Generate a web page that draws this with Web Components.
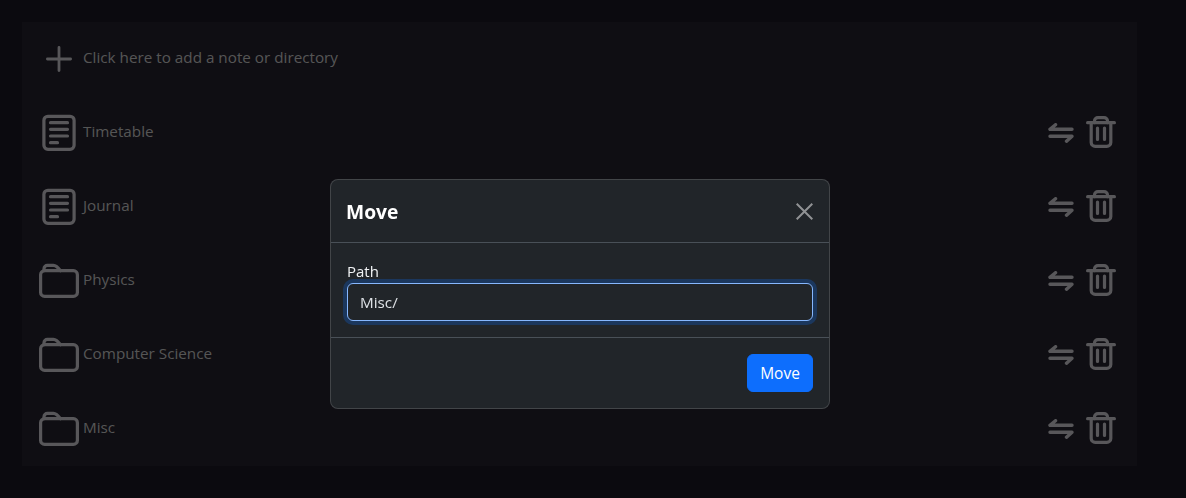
<!DOCTYPE html>
<html lang="en">
<head>
<meta charset="utf-8">
<title>Notes</title>
<style>
  html, body { margin: 0; height: 100%; }
  body {
    background: #16141e;
    color: #ababab;
    font: 16px/24px "Open Sans", "Noto Sans", sans-serif;
    overflow: hidden;
  }
</style>
</head>
<body>
<note-browser>
  <note-row kind="add">Click here to add a note or directory</note-row>
  <note-row kind="note" actions>Timetable</note-row>
  <note-row kind="note" actions>Journal</note-row>
  <note-row kind="folder" actions>Physics</note-row>
  <note-row kind="folder" actions>Computer Science</note-row>
  <note-row kind="folder" actions>Misc</note-row>
</note-browser>
<move-dialog path="Misc/"></move-dialog>

<script>
const ICONS = {
  add: `<svg width="26" height="26" viewBox="0 0 26 26" fill="none" stroke="currentColor" stroke-width="2.8" stroke-linecap="round"><path d="M13 1.400v23.200M1.400 13h23.200"/></svg>`,
  note: `<svg width="34" height="38" viewBox="0 0 34 38" fill="none" stroke="currentColor" stroke-width="3.2" stroke-linecap="round"><rect x="1.900" y="2.300" width="30.200" height="33" rx="4"/><path d="M8.500 8.700h17M8.500 15.300h17M8.500 22h17M8.500 28.700h7"/></svg>`,
  folder: `<svg width="42" height="36" viewBox="0 0 42 36" fill="none" stroke="currentColor" stroke-width="3.2" stroke-linecap="round" stroke-linejoin="round"><path d="M2.600 11.700a4 4 0 0 1 4-4h28.800a4 4 0 0 1 4 4v17.700a4 4 0 0 1-4 4H6.600a4 4 0 0 1-4-4z"/><path d="M6 7.700V5.700a3.400 3.400 0 0 1 3.400-3.400h6c3 0 5 2.500 7 5.400"/></svg>`
};

class NoteBrowser extends HTMLElement {
  connectedCallback() {
    this.attachShadow({ mode: 'open' });
    this.shadowRoot.innerHTML = `
      <style>
        :host {
          display: block;
          width: 1115px;
          margin: 22px 0 0 22px;
          background: #1e1c26;
        }
      </style>
      <slot></slot>
    `;
  }
}

class NoteRow extends HTMLElement {
  connectedCallback() {
    const kind = this.getAttribute('kind');
    const actions = this.hasAttribute('actions') ? `
      <div class="actions">
        <svg width="26" height="20" viewBox="0 0 26 20" fill="none" stroke="currentColor" stroke-width="3.400" stroke-linecap="round" stroke-linejoin="round">
          <path d="M7.500 1.700 2 6.300h22"/><path d="M2 13.300h22l-5.500 4.900"/>
        </svg>
        <svg class="trash" width="30" height="32" viewBox="0 0 30 32" fill="none" stroke="currentColor" stroke-width="3.200" stroke-linecap="round" stroke-linejoin="round">
          <path d="M1.600 6.700h26.800"/><path d="M8.500 6.700V5a3.400 3.400 0 0 1 3.400-3.400h6.200A3.400 3.400 0 0 1 21.500 5v1.700"/>
          <path d="M5.200 6.700v19.700a4 4 0 0 0 4 4h11.600a4 4 0 0 0 4-4V6.700"/>
          <path d="M11.500 12v11.500M18.500 12v11.500"/>
        </svg>
      </div>` : '';
    this.attachShadow({ mode: 'open' });
    this.shadowRoot.innerHTML = `
      <style>
        :host {
          display: flex;
          align-items: center;
          height: 74px;
          color: #b0afb4;
        }
        .icon {
          flex: none;
          width: 61px;
          display: flex;
          justify-content: center;
          padding-left: 13px;
          box-sizing: border-box;
        }
        .label { flex: 1; margin-top: -4px; font-size: 15.25px; color: #ababab; }
        .actions {
          display: flex;
          align-items: center;
          gap: 12px;
          padding-right: 21px;
        }
        .trash { margin-top: -2px; }
      </style>
      <div class="icon">${ICONS[kind]}</div>
      <div class="label"><slot></slot></div>
      ${actions}
    `;
  }
}

class MoveDialog extends HTMLElement {
  connectedCallback() {
    const path = this.getAttribute('path') || '';
    this.attachShadow({ mode: 'open' });
    this.shadowRoot.innerHTML = `
      <style>
        :host {
          position: fixed;
          inset: 0;
          background: rgba(0,0,0,.5);
          padding: 179px 0 0 330px;
          font: 16px/24px "Open Sans", "Noto Sans", sans-serif;
        }
        .modal {
          width: 500px;
          box-sizing: border-box;
          background: #212529;
          color: #fff;
          border: 1px solid rgba(255,255,255,.15);
          border-radius: 8px;
        }
        header {
          display: flex;
          justify-content: space-between;
          align-items: center;
          padding: 16px 16px 16px 15px;
          border-bottom: 1px solid #495057;
        }
        h5 { margin: 0; padding-top: 1px; height: 29px; font-size: 19.250px; line-height: 30px; font-weight: 700; }
        .close { display: block; color: #fff; opacity: .5; }
        .body { padding: 16px; }
        label { display: block; color: #f1f3f5; font-size: 15px; }
        input {
          display: block;
          width: 100%;
          height: 38px;
          box-sizing: border-box;
          padding: 6px 12px;
          background: #212529;
          color: #dee2e6;
          border: 1px solid #86b7fe;
          border-radius: 6px;
          box-shadow: 0 0 0 4px rgba(13,110,253,.25);
          font: inherit;
          font-size: 15.250px;
          outline: 0;
        }
        footer {
          display: flex;
          justify-content: flex-end;
          padding: 16px;
          border-top: 1px solid #495057;
        }
        button {
          height: 38px;
          width: 66px;
          padding: 0;
          background: #0d6efd;
          color: #fff;
          border: 1px solid #0d6efd;
          border-radius: 6px;
          font: inherit;
          font-size: 15.500px;
        }
      </style>
      <div class="modal">
        <header>
          <h5>Move</h5>
          <svg class="close" width="17" height="17" viewBox="0 0 17 17" fill="none" stroke="currentColor" stroke-width="2"><path d="M.700.700l15.600 15.600M16.300.700.700 16.300"/></svg>
        </header>
        <div class="body">
          <label>Path</label>
          <input value="${path}">
        </div>
        <footer><button>Move</button></footer>
      </div>
    `;
  }
}

customElements.define('note-browser', NoteBrowser);
customElements.define('note-row', NoteRow);
customElements.define('move-dialog', MoveDialog);
</script>
</body>
</html>
